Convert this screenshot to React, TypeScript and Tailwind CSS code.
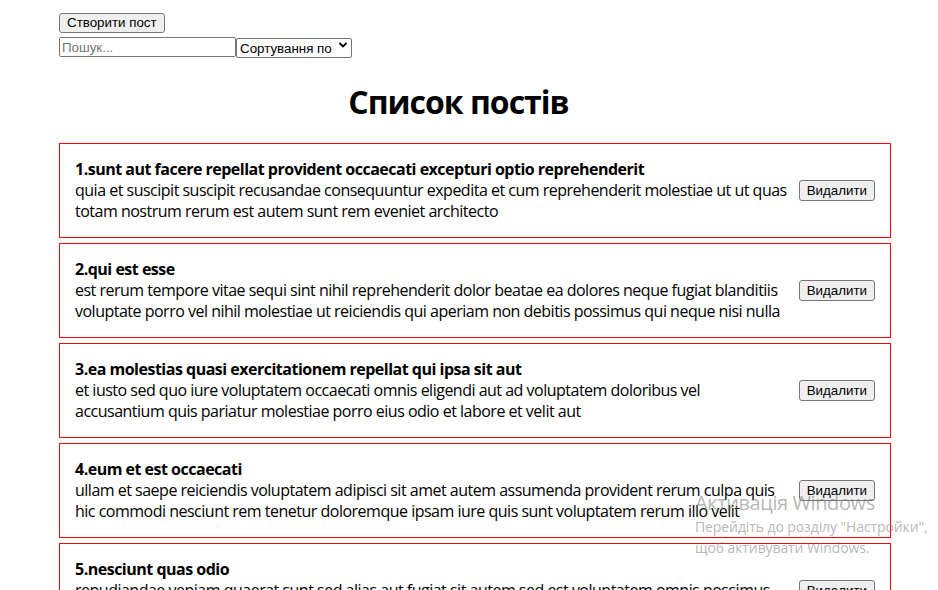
import React, { useState } from 'react';

interface Post {
  id: number;
  title: string;
  body: string;
}

const initialPosts: Post[] = [
  {
    id: 1,
    title: 'sunt aut facere repellat provident occaecati excepturi optio reprehenderit',
    body: 'quia et suscipit suscipit recusandae consequuntur expedita et cum reprehenderit molestiae ut ut quas totam nostrum rerum est autem sunt rem eveniet architecto',
  },
  {
    id: 2,
    title: 'qui est esse',
    body: 'est rerum tempore vitae sequi sint nihil reprehenderit dolor beatae ea dolores neque fugiat blanditiis voluptate porro vel nihil molestiae ut reiciendis qui aperiam non debitis possimus qui neque nisi nulla',
  },
  {
    id: 3,
    title: 'ea molestias quasi exercitationem repellat qui ipsa sit aut',
    body: 'et iusto sed quo iure voluptatem occaecati omnis eligendi aut ad voluptatem doloribus vel accusantium quis pariatur molestiae porro eius odio et labore et velit aut',
  },
  {
    id: 4,
    title: 'eum et est occaecati',
    body: 'ullam et saepe reiciendis voluptatem adipisci sit amet autem assumenda provident rerum culpa quis hic commodi nesciunt rem tenetur doloremque ipsam iure quis sunt voluptatem rerum illo velit',
  },
  {
    id: 5,
    title: 'nesciunt quas odio',
    body: 'repudiandae veniam quaerat sunt sed alias aut fugiat sit autem sed est voluptatem omnis possimus esse voluptatibus quis est aut tenetur dolor neque',
  },
];

const ctrl = "font-['Liberation_Sans',Arial,sans-serif] text-[13.33px] text-black tracking-normal";

const PostItem: React.FC<{ post: Post; onRemove: (id: number) => void }> = ({ post, onRemove }) => (
  <div className="mb-[5px] flex items-center justify-between border border-[#ff0000] px-[15px] py-[15px]">
    <div className="w-[715px] text-[16px] leading-[21px] tracking-[-0.5px] text-black">
      <strong className="font-bold">
        {post.id}.{post.title}
      </strong>
      <div>{post.body}</div>
    </div>
    <button
      onClick={() => onRemove(post.id)}
      className={`${ctrl} h-[21px] rounded-[3px] border border-[#767676] bg-[#efefef] px-[7px] leading-[17px]`}
    >
      Видалити
    </button>
  </div>
);

export default function App() {
  const [posts, setPosts] = useState(initialPosts);
  const [search, setSearch] = useState('');
  const [sort, setSort] = useState('');

  const removePost = (id: number) => setPosts(posts.filter(p => p.id !== id));

  return (
    <div className="relative h-[590px] w-[938px] overflow-hidden bg-white font-['Open_Sans','Segoe_UI',sans-serif]">
      <div className="ml-[59px] flex w-[832px] flex-col items-start pt-[13px]">
        <button
          className={`${ctrl} h-[20px] rounded-[3px] border border-[#767676] bg-[#efefef] px-[7px] leading-[16px]`}
        >
          Створити пост
        </button>
        <div className="mt-[4px] flex h-[20px] items-center">
          <input
            value={search}
            onChange={e => setSearch(e.target.value)}
            placeholder="Пошук..."
            className={`${ctrl} h-[20px] w-[177px] rounded-[2px] border border-[#767676] px-[2px] outline-none placeholder:text-[#757575]`}
          />
          <div className="relative">
            <select
              value={sort}
              onChange={e => setSort(e.target.value)}
              className={`${ctrl} h-[20px] w-[116px] appearance-none rounded-[2px] border border-[#767676] bg-white pl-[3px] pr-[18px] outline-none`}
            >
              <option value="" disabled>
                Сортування по
              </option>
              <option value="title">По назві</option>
              <option value="body">По опису</option>
            </select>
            <svg
              className="pointer-events-none absolute right-[4px] top-[6px]"
              width="10"
              height="8"
              viewBox="0 0 10 8"
            >
              <path d="M1.5 2 L5 5.5 L8.5 2" fill="none" stroke="black" strokeWidth="1.8" />
            </svg>
          </div>
        </div>
      </div>

      <div className="w-[917px] text-center">
        <h1 className="mt-[24px] mb-[20px] text-[32px] font-bold leading-[42px] tracking-[-1px] text-black">Список постів</h1>
      </div>

      <div className="ml-[59px] w-[832px]">
        {posts.map(p => (
          <PostItem key={p.id} post={p} onRemove={removePost} />
        ))}
      </div>

      <div className="pointer-events-none absolute left-[695px] top-[490px] text-[rgba(120,120,120,0.55)]">
        <div className="text-[20px] leading-[26px] tracking-[-0.4px]">Активація Windows</div>
        <div className="text-[14px] leading-[21px] tracking-[-0.1px]">Перейдіть до розділу "Настройки",</div>
        <div className="text-[14px] leading-[21px] tracking-[-0.1px]">щоб активувати Windows.</div>
      </div>
    </div>
  );
}
